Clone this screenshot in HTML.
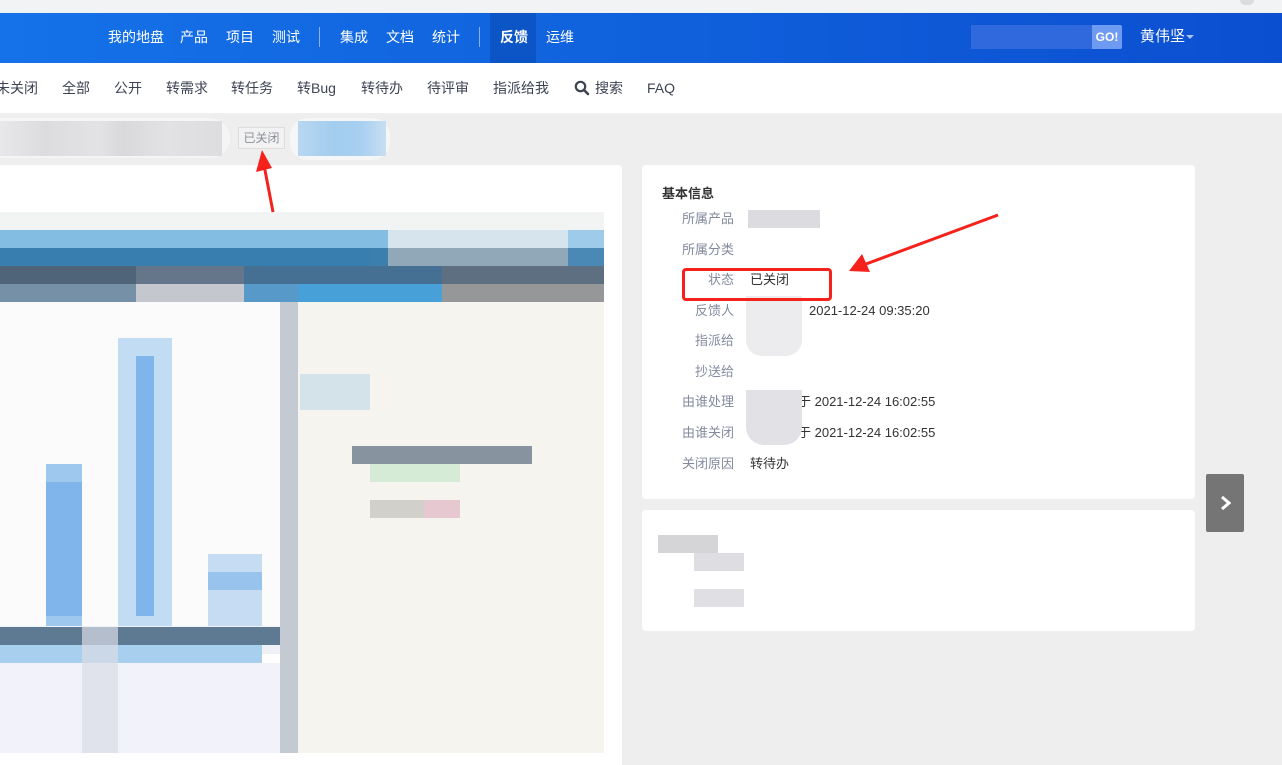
<!DOCTYPE html>
<html><head><meta charset="utf-8"><style>
*{margin:0;padding:0;box-sizing:border-box}
body{width:1282px;height:753px;overflow:hidden;background:#eeeeee;font-family:"Liberation Sans","Noto Sans CJK SC",sans-serif;position:relative}
.a{position:absolute}
.nav span{position:absolute;top:29px;color:#fff;font-size:14px;line-height:16px}
.sub span{position:absolute;top:80px;color:#3c4353;font-size:14px;line-height:16px}
.lb{position:absolute;left:640px;width:94px;text-align:right;color:#838a9d;font-size:13px;line-height:16px}
.vl{position:absolute;left:750px;color:#333;font-size:13px;line-height:16px}
</style></head><body>
<div class="a" style="left:0;top:0;width:1282px;height:12px;background:#f1f3f4"></div>
<div class="a" style="left:1240px;top:0;width:14px;height:5px;border-radius:0 0 7px 7px;background:#dadce0"></div>
<div class="a nav" style="left:0;top:13px;width:1282px;height:50px;background:linear-gradient(90deg,#1572e8,#0b4fd0)">
<div class="a" style="left:490px;top:0;width:46px;height:50px;background:#0b55c6"></div>
<div class="a" style="left:319px;top:14px;width:1px;height:20px;background:rgba(255,255,255,.5)"></div>
<div class="a" style="left:479px;top:14px;width:1px;height:20px;background:rgba(255,255,255,.5)"></div>
<span style="left:108px;top:16px">我的地盘</span><span style="left:180px;top:16px">产品</span><span style="left:226px;top:16px">项目</span><span style="left:272px;top:16px">测试</span>
<span style="left:340px;top:16px">集成</span><span style="left:386px;top:16px">文档</span><span style="left:432px;top:16px">统计</span>
<span style="left:500px;top:16px;font-weight:bold">反馈</span><span style="left:546px;top:16px">运维</span>
<div class="a" style="left:971px;top:12px;width:121px;height:24px;background:#3068de"></div>
<div class="a" style="left:1092px;top:12px;width:30px;height:24px;background:#6e9bf1;border-radius:0 2px 2px 0;color:#fff;font-size:12px;font-weight:bold;line-height:24px;text-align:center">GO!</div>
<span style="left:1140px;top:16px;font-size:15px">黄伟坚</span>
<div class="a" style="left:1186px;top:22px;border:4px solid transparent;border-top:4px solid #aac4f0;border-bottom:0"></div>
</div>
<div class="a sub" style="left:0;top:63px;width:1282px;height:50px;background:#fff"></div>
<div class="sub">
<span style="left:-4px">未关闭</span><span style="left:62px">全部</span><span style="left:114px">公开</span><span style="left:166px">转需求</span><span style="left:231px">转任务</span><span style="left:297px">转Bug</span><span style="left:361px">转待办</span><span style="left:427px">待评审</span><span style="left:493px">指派给我</span>
<svg class="a" style="left:574px;top:80px" width="16" height="16" viewBox="0 0 16 16"><circle cx="6.5" cy="6.5" r="4.7" fill="none" stroke="#3c4353" stroke-width="2.2"/><path d="M10 10l4 4" stroke="#3c4353" stroke-width="2.6" stroke-linecap="round"/></svg>
<span style="left:595px">搜索</span><span style="left:647px">FAQ</span>
</div>
<!-- title blur -->
<div class="a" style="left:0;top:118px;width:230px;height:40px;background:#f5f5f5;border-radius:0 20px 20px 0"></div>
<div class="a" style="left:0;top:121px;width:222px;height:35px;background:linear-gradient(90deg,#e8e8ea 0,#dcdcde 20%,#e3e3e5 45%,#d9d9db 55%,#e2e2e4 75%,#dddde0 100%)"></div>
<div class="a" style="left:238px;top:127px;width:47px;height:22px;border:1px solid #ddd;background:#f2f2f2;color:#8a8f99;font-size:12px;line-height:20px;text-align:center">已关闭</div>
<div class="a" style="left:290px;top:118px;width:100px;height:42px;background:#f4f6f8;border-radius:18px"></div>
<div class="a" style="left:298px;top:121px;width:88px;height:35px;background:linear-gradient(90deg,#b8d7f1,#a3cdee 40%,#a7cff0 70%,#c7def1)"></div>
<!-- left card -->
<div class="a" style="left:0;top:165px;width:622px;height:600px;background:#fff;border-radius:0 4px 0 0"></div>
<div class="a" style="left:0;top:212px;width:604px;height:18px;background:#f2f4f4"></div>
<div class="a" style="left:0;top:230px;width:388px;height:18px;background:#84bde2"></div>
<div class="a" style="left:388px;top:230px;width:180px;height:18px;background:#d6e4ee"></div>
<div class="a" style="left:568px;top:230px;width:36px;height:18px;background:#9fcbeb"></div>
<div class="a" style="left:0;top:248px;width:370px;height:18px;background:#387eae"></div>
<div class="a" style="left:370px;top:248px;width:18px;height:18px;background:#3d7fac"></div>
<div class="a" style="left:388px;top:248px;width:180px;height:18px;background:#90a8b8"></div>
<div class="a" style="left:568px;top:248px;width:36px;height:18px;background:#4a88b6"></div>
<div class="a" style="left:0;top:266px;width:136px;height:18px;background:#4f6479"></div>
<div class="a" style="left:136px;top:266px;width:108px;height:18px;background:#65758a"></div>
<div class="a" style="left:244px;top:266px;width:198px;height:18px;background:#456f93"></div>
<div class="a" style="left:442px;top:266px;width:162px;height:18px;background:#5d6f80"></div>
<div class="a" style="left:0;top:284px;width:136px;height:18px;background:#7690a8"></div>
<div class="a" style="left:136px;top:284px;width:108px;height:18px;background:#c4c7cd"></div>
<div class="a" style="left:244px;top:284px;width:54px;height:18px;background:#5799c9"></div>
<div class="a" style="left:298px;top:284px;width:144px;height:18px;background:#47a0d8"></div>
<div class="a" style="left:442px;top:284px;width:162px;height:18px;background:#959799"></div>
<div class="a" style="left:0;top:302px;width:280px;height:352px;background:#fbfbfb"></div>
<div class="a" style="left:280px;top:302px;width:18px;height:451px;background:#c4cad2"></div>
<div class="a" style="left:298px;top:302px;width:306px;height:451px;background:#f6f4ee"></div>
<div class="a" style="left:352px;top:446px;width:180px;height:18px;background:#8893a0"></div>
<div class="a" style="left:370px;top:464px;width:90px;height:18px;background:#d6ebd5"></div>
<div class="a" style="left:424px;top:500px;width:36px;height:18px;background:#e6c8d0"></div>
<div class="a" style="left:370px;top:500px;width:54px;height:18px;background:#d1d0cb"></div>
<div class="a" style="left:300px;top:374px;width:70px;height:36px;background:#d4e3ea"></div>
<div class="a" style="left:118px;top:338px;width:54px;height:297px;background:#c2dcf3"></div>
<div class="a" style="left:136px;top:356px;width:18px;height:260px;background:#7fb5ea"></div>
<div class="a" style="left:46px;top:464px;width:36px;height:171px;background:#9fc8ee"></div>
<div class="a" style="left:46px;top:482px;width:36px;height:134px;background:#7fb5ea"></div>
<div class="a" style="left:208px;top:554px;width:54px;height:81px;background:#c6dcf2"></div>
<div class="a" style="left:208px;top:572px;width:54px;height:18px;background:#98c3ec"></div>
<div class="a" style="left:0;top:626px;width:280px;height:28px;background:#eef1f5"></div>
<div class="a" style="left:0;top:627px;width:280px;height:18px;background:#5e7a93"></div>
<div class="a" style="left:0;top:645px;width:262px;height:18px;background:#a8cfee"></div>
<div class="a" style="left:0;top:663px;width:280px;height:90px;background:#f2f2fa"></div>
<div class="a" style="left:82px;top:627px;width:36px;height:126px;background:#d8dbe5;opacity:.7"></div>
<!-- right cards -->
<div class="a" style="left:642px;top:165px;width:553px;height:334px;background:#fff;border-radius:4px"></div>
<div class="a" style="left:642px;top:510px;width:553px;height:121px;background:#fff;border-radius:4px"></div>
<div class="a" style="left:662px;top:186px;font-size:13px;font-weight:bold;color:#333;line-height:16px">基本信息</div>
<div class="lb" style="top:211px">所属产品</div><div class="a" style="left:748px;top:210px;width:72px;height:18px;background:#dcdce0"></div>
<div class="lb" style="top:242px">所属分类</div>
<div class="lb" style="top:272px">状态</div><div class="vl" style="top:272px">已关闭</div>
<div class="lb" style="top:303px">反馈人</div><div class="vl" style="left:809px;top:303px">2021-12-24 09:35:20</div>
<div class="lb" style="top:333px">指派给</div>
<div class="lb" style="top:364px">抄送给</div>
<div class="lb" style="top:394px">由谁处理</div><div class="vl" style="left:798px;top:394px">于 2021-12-24 16:02:55</div>
<div class="lb" style="top:425px">由谁关闭</div><div class="vl" style="left:798px;top:425px">于 2021-12-24 16:02:55</div>
<div class="lb" style="top:456px">关闭原因</div><div class="vl" style="top:456px">转待办</div>
<div class="a" style="left:746px;top:296px;width:56px;height:60px;background:#ececef;border-radius:0 0 16px 16px"></div>
<div class="a" style="left:746px;top:390px;width:56px;height:55px;background:#e2e2e6;border-radius:0 0 18px 18px"></div>
<div class="a" style="left:658px;top:535px;width:60px;height:18px;background:#d5d5d8"></div>
<div class="a" style="left:694px;top:553px;width:50px;height:18px;background:#dedee2"></div>
<div class="a" style="left:694px;top:589px;width:50px;height:18px;background:#e0e0e4"></div>
<div class="a" style="left:682px;top:268px;width:150px;height:33px;border:3px solid #f5221b;border-radius:4px"></div>
<div class="a" style="left:1206px;top:474px;width:38px;height:58px;background:#757575;border-radius:2px"></div>
<svg class="a" style="left:1206px;top:474px" width="38" height="58"><path d="M16 23l7 6-7 6" fill="none" stroke="#fff" stroke-width="3"/></svg>
<svg class="a" style="left:0;top:0" width="1282" height="753">
<path d="M273 212L264 165" stroke="#f5221b" stroke-width="3"/><path d="M262 150L256 172L272 168Z" fill="#f5221b"/>
<path d="M998 215L866 264" stroke="#f5221b" stroke-width="3"/><path d="M849 271L862 254L870 272Z" fill="#f5221b"/>
</svg>
</body></html>
